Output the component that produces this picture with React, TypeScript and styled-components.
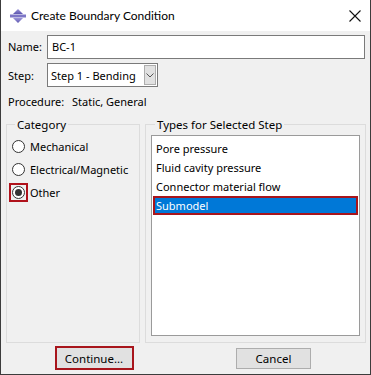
import React from 'react';
import styled, { createGlobalStyle } from 'styled-components';

const GlobalStyle = createGlobalStyle`
  html, body {
    margin: 0;
    padding: 0;
    background: #ffffff;
  }
  body {
    font-family: 'Noto Sans', 'Open Sans', sans-serif;
    font-size: 11px;
    color: #000;
  }
`;

const Window = styled.div`
  width: 371px;
  height: 375px;
  box-sizing: border-box;
  border: 1px solid #3c3c3c;
  border-top: none;
  background: #f0f0f0;
  display: flex;
  flex-direction: column;
`;

const TitleBar = styled.div`
  height: 31px;
  background: #ffffff;
  display: flex;
  align-items: center;
  padding: 0 9px 0 9px;
  gap: 5px;
`;

const Title = styled.span`
  flex: 1;
  font-family: 'Lato', 'Noto Sans', sans-serif;
  font-size: 12px;
`;

const Body = styled.div`
  flex: 1;
  display: flex;
  flex-direction: column;
  padding: 2px 5px 0 5px;
`;

const Row = styled.div<{ $h: number }>`
  display: flex;
  align-items: center;
  height: ${({ $h }) => $h}px;
  padding-left: 2px;
`;

const Label = styled.span<{ $w: number }>`
  width: ${({ $w }) => $w}px;
  flex-shrink: 0;
`;

const TextInput = styled.div`
  flex: 1;
  height: 24px;
  box-sizing: border-box;
  border: 1px solid #7a7a7a;
  background: #fff;
  display: flex;
  align-items: center;
  padding-left: 4px;
`;

const Select = styled.div`
  width: 111px;
  height: 24px;
  box-sizing: border-box;
  border: 1px solid #7a7a7a;
  background: #fff;
  display: flex;
  align-items: center;
  padding: 0 1px 0 3px;
`;

const SelectText = styled.span`
  flex: 1;
`;

const SelectArrow = styled.div`
  width: 12px;
  height: 20px;
  box-sizing: border-box;
  border: 1px solid #adadad;
  background: #e1e1e1;
  display: flex;
  align-items: center;
  justify-content: center;
`;

const Groups = styled.div`
  display: grid;
  grid-template-columns: 134px 221px;
  gap: 5px;
  margin-top: 5px;
  height: 226px;
`;

const Group = styled.fieldset<{ $pad: number }>`
  margin: 0;
  padding: 3px ${({ $pad }) => $pad}px 6px ${({ $pad }) => $pad}px;
  border: 1px solid #dcdcdc;
  min-width: 0;
  display: flex;
  flex-direction: column;
`;

const Legend = styled.legend`
  padding: 0 2px;
  margin-left: 4px;
  font-size: 11.5px;
`;

const RadioRow = styled.label`
  display: flex;
  align-items: center;
  height: 23px;
  gap: 5px;
  padding-left: 1px;
`;

const RadioWrap = styled.span<{ $marked?: boolean }>`
  width: 19px;
  height: 19px;
  box-sizing: border-box;
  margin-left: -3px;
  margin-right: -3px;
  display: flex;
  align-items: center;
  justify-content: center;
  border: 2px solid ${({ $marked }) => ($marked ? '#b0121b' : 'transparent')};
`;

const RadioCircle = styled.span<{ $on?: boolean }>`
  width: 13px;
  height: 13px;
  box-sizing: border-box;
  border-radius: 50%;
  border: 1px solid #333;
  background: #fff;
  display: flex;
  align-items: center;
  justify-content: center;
  &::after {
    content: '';
    display: ${({ $on }) => ($on ? 'block' : 'none')};
    width: 7px;
    height: 7px;
    border-radius: 50%;
    background: #333;
  }
`;

const ListBox = styled.div`
  flex: 1;
  border: 1px solid #9a9a9a;
  background: #fff;
  padding: 3px 1px;
  display: flex;
  flex-direction: column;
`;

const ListItem = styled.div<{ $selected?: boolean }>`
  height: 19px;
  box-sizing: border-box;
  display: flex;
  align-items: center;
  padding-left: ${({ $selected }) => ($selected ? '1px' : '3px')};
  background: ${({ $selected }) => ($selected ? '#0078d7' : 'transparent')};
  color: ${({ $selected }) => ($selected ? '#fff' : '#000')};
  border: ${({ $selected }) => ($selected ? '2px solid #a8151c' : 'none')};
`;

const Footer = styled.div`
  display: grid;
  grid-template-columns: 176px 1fr;
  align-items: center;
  height: 30px;
`;

const Button = styled.button<{ $marked?: boolean }>`
  justify-self: center;
  width: ${({ $marked }) => ($marked ? '79px' : '75px')};
  height: ${({ $marked }) => ($marked ? '24px' : '21px')};
  box-sizing: border-box;
  font-family: inherit;
  font-size: 11.5px;
  color: #000;
  background: #e1e1e1;
  border: ${({ $marked }) => ($marked ? '2px solid #a8151c' : '1px solid #adadad')};
  padding: 0;
`;

const TitleIcon = () => (
  <svg width="16" height="14" viewBox="0 0 16 14">
    <defs>
      <linearGradient id="g" x1="0" y1="0" x2="0" y2="1">
        <stop offset="0" stopColor="#9a94d8" />
        <stop offset="1" stopColor="#5e57b0" />
      </linearGradient>
    </defs>
    <path d="M8 0 L13 5 H3 Z" fill="url(#g)" />
    <rect x="0" y="5.5" width="16" height="3" fill="#7d76c6" />
    <path d="M3 9 H13 L8 14 Z" fill="url(#g)" />
  </svg>
);

const CloseIcon = () => (
  <svg width="12" height="12" viewBox="0 0 12 12">
    <path d="M0.5 0.5 L11.5 11.5 M11.5 0.5 L0.5 11.5" stroke="#111" strokeWidth="1.1" />
  </svg>
);

const Chevron = () => (
  <svg width="8" height="5" viewBox="0 0 8 5">
    <path d="M0.5 0.5 L4 4 L7.5 0.5" stroke="#555" fill="none" strokeWidth="1" />
  </svg>
);

const types = ['Pore pressure', 'Fluid cavity pressure', 'Connector material flow', 'Submodel'];

export default function App() {
  return (
    <>
      <GlobalStyle />
      <Window>
        <TitleBar>
          <TitleIcon />
          <Title>Create Boundary Condition</Title>
          <CloseIcon />
        </TitleBar>
        <Body>
          <Row $h={27}>
            <Label $w={39}>Name:</Label>
            <TextInput>BC-1</TextInput>
          </Row>
          <Row $h={30}>
            <Label $w={39}>Step:</Label>
            <Select>
              <SelectText>Step 1 - Bending</SelectText>
              <SelectArrow>
                <Chevron />
              </SelectArrow>
            </Select>
          </Row>
          <Row $h={22}>
            <Label $w={64}>Procedure:</Label>
            <span>Static, General</span>
          </Row>
          <Groups>
            <Group $pad={4}>
              <Legend>Category</Legend>
              <RadioRow>
                <RadioWrap><RadioCircle /></RadioWrap>
                Mechanical
              </RadioRow>
              <RadioRow>
                <RadioWrap><RadioCircle /></RadioWrap>
                Electrical/Magnetic
              </RadioRow>
              <RadioRow>
                <RadioWrap $marked><RadioCircle $on /></RadioWrap>
                Other
              </RadioRow>
            </Group>
            <Group $pad={5}>
              <Legend>Types for Selected Step</Legend>
              <ListBox>
                {types.map((t) => (
                  <ListItem key={t} $selected={t === 'Submodel'}>
                    {t}
                  </ListItem>
                ))}
              </ListBox>
            </Group>
          </Groups>
          <Footer>
            <Button $marked>Continue...</Button>
            <Button>Cancel</Button>
          </Footer>
        </Body>
      </Window>
    </>
  );
}
